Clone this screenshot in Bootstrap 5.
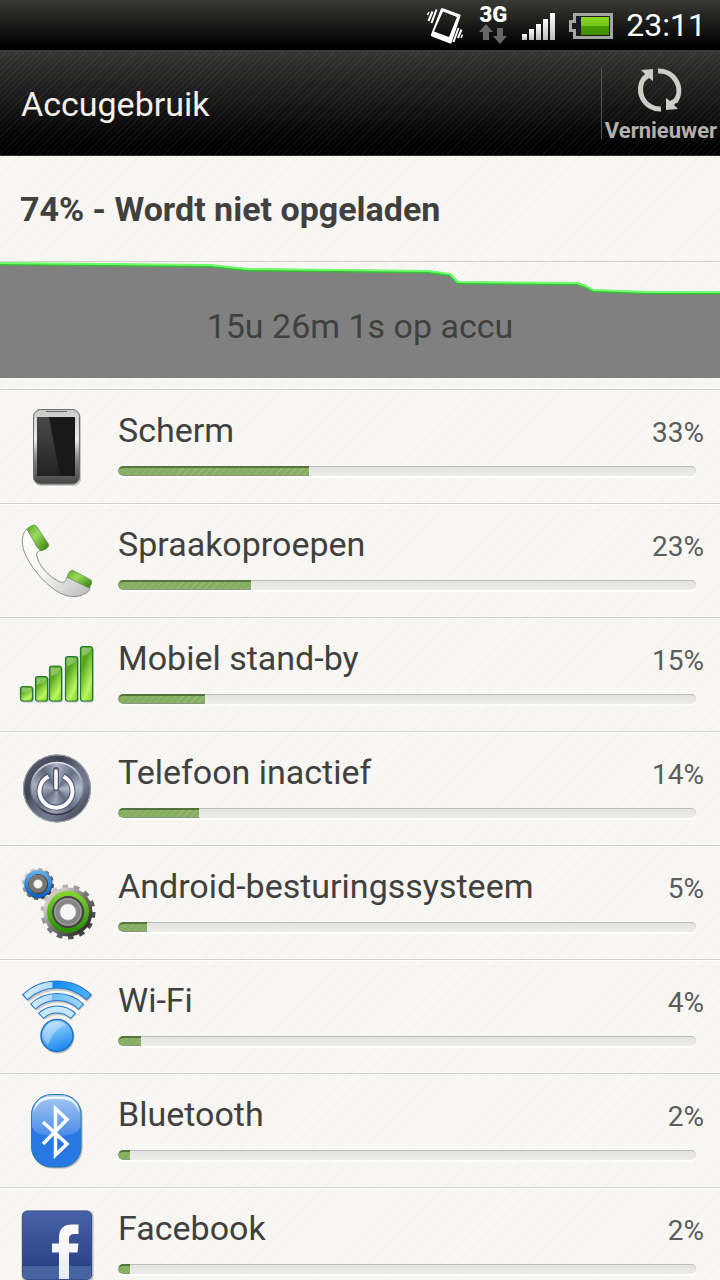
<!DOCTYPE html>
<html lang="nl">
<head>
<meta charset="utf-8">
<meta name="viewport" content="width=device-width, initial-scale=1">
<title>Accugebruik</title>
<link href="https://cdn.jsdelivr.net/npm/bootstrap@5.3.0/dist/css/bootstrap.min.css" rel="stylesheet">
<style>
  body { font-family: Roboto, "Liberation Sans", sans-serif; color: #40403e; background-color: #f7f6f2; }
  .paper { background-image: repeating-linear-gradient(135deg, #f9f8f5 0 2px, #f3f2ee 2px 3px); }
  .statusbar { height: 50px; padding-right: 14px; gap: 13px; background: linear-gradient(#393937, #000 92%); color: #fff; }
  .clock { font-size: 32px; line-height: 52px; }
  .net { font-size: 22px; line-height: 18px; font-weight: 900; }
  .appbar { height: 106px; padding-left: 21px; border-top: 2px solid #3c3c3b; border-bottom: 1px solid #2b2b2a;
    background-image: repeating-linear-gradient(135deg, rgba(255,255,255,.05) 0 1px, transparent 1px 4px), linear-gradient(#333332, #000 90%); color: #f3f1ea; }
  .appbar h1 { font-size: 34px; line-height: 42px; font-weight: 400; }
  .refresh { width: 119px; height: 70px; padding: 0 2px; border: 0; border-left: 1px solid #555; background: none; color: #b4b2ae; }
  .refresh svg { overflow: visible; }
  .refresh span { font-size: 22px; line-height: 16px; font-weight: 700; }
  .state { height: 106px; padding-left: 20px; border-bottom: 1px solid #d2d2ce; }
  .state h2 { font-size: 34px; line-height: 42px; font-weight: 700; }
  .history { height: 116px; margin-bottom: 11px; }
  .history svg { width: 100%; height: 100%; }
  .history p { font-size: 34px; line-height: 42px; padding-top: 12px; }
  .usage { border-top: 1px solid #d0d1cb; height: 114px; padding: 0 16px 0 17px; gap: 21px; box-shadow: inset 0 1px #fff; }
  .usage > svg { width: 80px; height: 80px; }
  .app-name { font-size: 34px; line-height: 40px; }
  .share { font-size: 28px; line-height: 34px; color: #5c5c5a; }
  .meter { height: 10px; margin: 16px 8px 8px 0; border-radius: 5px; background: linear-gradient(#e2e2df, #edece9); box-shadow: inset 0 1px #bfbfba, 0 2px #fff; --bs-progress-bar-bg: #86ae62; }
  .meter .progress-bar { background-image: repeating-linear-gradient(135deg, rgba(255,255,255,.14) 0 1px, transparent 1px 5px); border: 1px solid #8a9680; border-top: 2px solid #55733c; border-right: 0; border-radius: 5px 0 0 5px; }
  .power { border-radius: 50%; background: radial-gradient(circle, transparent 25px, #f7f6f2 34px) , conic-gradient(from 0deg at 50% 50%, #aab0c0, #667086 12%, #b4b9ca 24%, #626b80 40%, #9fa5b5 52%, #667086 64%, #a7adbd 78%, #5f687c 90%, #aab0c0); }
</style>
</head>
<body class="vh-100 d-flex flex-column overflow-hidden">
<div class="statusbar d-flex justify-content-end align-items-center flex-shrink-0">
  <svg width="38" height="40" viewBox="424 5 38 40" fill="none" stroke="#fff" aria-hidden="true">
    <path fill="#fff" stroke="none" fill-rule="evenodd" d="M439 8.500Q440 8 441 8.300L458 14.500Q459 15 458.500 16L449.500 43Q449 44 448 43.600L430 36.500Q428.500 36 429 34.500ZM441 11.500L432 31.500L447 37L455 17Z"/>
    <path stroke-width="2" d="M426.500 21L430.500 11.500M429.500 23L434.500 9.500M459.500 29.500L456 38M456.500 28L451.500 42"/>
    <path stroke-width="1.500" d="M425.500 15L427 12M460.500 34.500L459 38"/>
  </svg>
  <div class="d-flex flex-column align-items-center">
    <span class="net">3G</span>
    <svg width="32" height="21" viewBox="475 26 32 21" fill="#666" aria-hidden="true"><path d="M484 26L491 34H487V42H481V34H477ZM495 30H501V38H505L498 46L491 38H495Z"/></svg>
  </div>
  <svg width="34" height="30" viewBox="0 -3 34 30" aria-hidden="true">
    <defs><linearGradient id="sg" x2="0" y2="1"><stop stop-color="#fff"/><stop offset="1" stop-color="#bbb"/></linearGradient></defs>
    <g fill="url(#sg)"><path d="M0 21h5v6H0z"/><path d="M7 16h5v11H7z"/><path d="M14 11h5v16h-5z"/><path d="M21 6h5v21h-5z"/><path d="M28 0h5v27h-5z"/></g>
  </svg>
  <svg width="44" height="26" viewBox="569 12 44 26" overflow="visible" aria-hidden="true">
    <defs><linearGradient id="bat" x2="0" y2="1"><stop stop-color="#8edb24"/><stop offset=".48" stop-color="#72c31c"/><stop offset=".52" stop-color="#479c00"/><stop offset="1" stop-color="#3f8b00"/></linearGradient></defs>
    <path d="M573 13H613V39H573V32H569V20H573Z" fill="#a5a5a4"/><path d="M576 16H610V36H576V29H572V23H576Z" fill="#1b1b1b"/><path d="M581 17H609V35H581Z" fill="url(#bat)"/>
  </svg>
  <span class="clock">23:11</span>
</div>

<header class="appbar d-flex justify-content-between align-items-center flex-shrink-0">
  <h1 class="m-0">Accugebruik</h1>
  <button type="button" class="refresh d-flex flex-column align-items-center justify-content-between">
    <svg width="48" height="44" viewBox="637 68 48 44" class="flex-shrink-0" aria-hidden="true">
      <g fill="none" stroke="#ceccc6" stroke-width="5"><path d="M661 108A19.500 19.500 0 0 1 645 76"/><path d="M658 70A19.500 19.500 0 0 1 675 101"/></g>
      <path fill="#ceccc6" d="M641 69L653 68V80L649 77L645 80L642 77L645 73ZM678 108L666 109V97L670 100L675 97L678 100L674 104Z"/>
    </svg>
    <span>Vernieuwer</span>
  </button>
</header>

<section class="state paper d-flex align-items-center flex-shrink-0"><h2 class="m-0">74% - Wordt niet opgeladen</h2></section>

<div class="paper flex-shrink-0">
  <section class="history position-relative">
    <svg class="d-block" viewBox="0 0 720 116" preserveAspectRatio="none" aria-hidden="true">
      <path fill="#808080" d="M0 2L210 4L248 8L428 10L450 13L458 21L577 22L586 25L593 29L648 31H720V116H0Z"/>
      <g fill="none" stroke-linejoin="round"><path stroke="#39bd38" stroke-width="3" d="M0 2L210 4L248 8L428 10L450 13L458 21L577 22L586 25L593 29L648 31H720"/>
      <path stroke="#6eff6b" stroke-width="2" d="M0 1L210 3L248 7L428 9L450 12L458 20L577 21L586 24L593 28L648 30H720"/></g>
    </svg>
    <p class="position-absolute top-0 start-0 w-100 h-100 m-0 d-flex align-items-center justify-content-center">15u 26m 1s op accu</p>
  </section>
</div>

<main class="paper flex-grow-1 overflow-hidden">
  <article class="usage d-flex align-items-center">
    <svg viewBox="0 0 80 80" class="flex-shrink-0" aria-hidden="true">
      <defs><linearGradient id="ph" x2="0" y2="1"><stop stop-color="#c8c8c8"/><stop offset=".4" stop-color="#eee"/><stop offset=".65" stop-color="#888"/><stop offset="1" stop-color="#444"/></linearGradient>
      <linearGradient id="gl" x2="0" y2="1"><stop stop-color="#555"/><stop offset="1" stop-color="#252525"/></linearGradient></defs>
      <rect x="17" y="4" width="47" height="75" rx="7" fill="#aaa" opacity=".6"/><rect x="16.500" y="2.500" width="46" height="74.500" rx="7" fill="url(#ph)" stroke="#6f6f6f"/>
      <rect x="20" y="10" width="38" height="59" fill="#191919"/><path d="M20 10H32L43 69H20Z" fill="url(#gl)" opacity=".8"/><path d="M29 4.500H50" stroke="#666"/>
    </svg>
    <div class="flex-grow-1"><div class="d-flex justify-content-between align-items-baseline"><span class="app-name">Scherm</span><span class="share">33%</span></div>
      <div class="progress meter" role="progressbar" aria-label="Scherm" aria-valuenow="33" aria-valuemin="0" aria-valuemax="100"><div class="progress-bar" style="width:33%"></div></div></div>
  </article>
  <article class="usage d-flex align-items-center">
    <svg viewBox="0 0 80 80" class="flex-shrink-0" aria-hidden="true">
      <defs><linearGradient id="hs" x2="1" y2="1"><stop stop-color="#fff"/><stop offset=".5" stop-color="#f4f4f4"/><stop offset="1" stop-color="#bbb"/></linearGradient>
      <linearGradient id="ear" x2="1" y2="1"><stop stop-color="#5aa52c"/><stop offset=".4" stop-color="#9bdc5c"/><stop offset="1" stop-color="#2b7a08"/></linearGradient></defs>
      <path d="M10 8C5 12 4 21 7 30C12 44 25 60 38 69C48 76 58 77 65 74C70 72 73 70 73 66L50 56C49 61 46 63 41 60C30 54 21 43 20 35C19 32 21 30 24 29Z" fill="url(#hs)" stroke="#8d8d8d"/>
      <path d="M10 8Q14 4 18 4L20 6L32 24Q31 28 24 30Q22 28 20 26Z" fill="url(#ear)" stroke="#5c8a42" stroke-width=".7"/>
      <path d="M50 56Q51 51 55 49L74 59Q76 61 72 67Z" fill="url(#ear)" stroke="#5c8a42" stroke-width=".7"/>
    </svg>
    <div class="flex-grow-1"><div class="d-flex justify-content-between align-items-baseline"><span class="app-name">Spraakoproepen</span><span class="share">23%</span></div>
      <div class="progress meter" role="progressbar" aria-label="Spraakoproepen" aria-valuenow="23" aria-valuemin="0" aria-valuemax="100"><div class="progress-bar" style="width:23%"></div></div></div>
  </article>
  <article class="usage d-flex align-items-center">
    <svg viewBox="0 0 80 80" class="flex-shrink-0" aria-hidden="true">
      <defs><linearGradient id="mb" x1="0" y1="0" x2=".6" y2="1"><stop stop-color="#6fae3c"/><stop offset=".35" stop-color="#55a61c"/><stop offset=".85" stop-color="#bdf763"/><stop offset="1" stop-color="#9be23f"/></linearGradient></defs>
      <g fill="#999" opacity=".6"><rect x="4" y="52" width="13" height="15.500" rx="3"/><rect x="19" y="42" width="13" height="25.500" rx="3"/><rect x="33" y="32" width="13" height="35.500" rx="3"/><rect x="49" y="22" width="13" height="45.500" rx="3"/><rect x="64" y="12" width="13" height="55.500" rx="3"/></g>
      <g fill="url(#mb)" stroke="#1f7a32" stroke-width="1.200"><rect x="3.500" y="51.500" width="12" height="14.500" rx="2.500"/><rect x="18.500" y="41.500" width="12" height="24.500" rx="2.500"/><rect x="32.500" y="31" width="12" height="35" rx="2.500"/><rect x="48.500" y="21.500" width="12" height="44.500" rx="2.500"/><rect x="63.500" y="11.500" width="12" height="54.500" rx="2.500"/></g>
      <g fill="#fff" opacity=".3"><path d="M5 53h9q-1 4-9 5zM20 43h9q-1 5-9 7zM34 33h9q-1 6-9 8zM50 23h9q-1 6-9 8zM65 13h9q-1 6-9 8z"/></g>
    </svg>
    <div class="flex-grow-1"><div class="d-flex justify-content-between align-items-baseline"><span class="app-name">Mobiel stand-by</span><span class="share">15%</span></div>
      <div class="progress meter" role="progressbar" aria-label="Mobiel stand-by" aria-valuenow="15" aria-valuemin="0" aria-valuemax="100"><div class="progress-bar" style="width:15%"></div></div></div>
  </article>
  <article class="usage d-flex align-items-center">
    <svg viewBox="0 0 80 80" class="power flex-shrink-0" aria-hidden="true">
      <defs><linearGradient id="rim" x2="1" y2="1"><stop stop-color="#5a6170"/><stop offset=".3" stop-color="#3f4552"/><stop offset=".5" stop-color="#666e80"/><stop offset=".7" stop-color="#747c90"/><stop offset="1" stop-color="#343843"/></linearGradient>
      <linearGradient id="rim2" x2="0" y2="1"><stop stop-color="#dfe2ea"/><stop offset=".5" stop-color="#8a91a3"/><stop offset="1" stop-color="#2d313b"/></linearGradient></defs>
      <g fill="none"><circle cx="40" cy="39.500" r="30" stroke="url(#rim)" stroke-width="8"/><circle cx="40" cy="39.500" r="33.500" stroke="#a2a6ae"/><circle cx="40" cy="39.500" r="26" stroke="url(#rim2)" stroke-width="1.500"/>
      <path d="M32 27A16.500 16.500 0 1 0 46 27" stroke="#515a6c" stroke-width="6"/><path d="M39 21V39" stroke="#515a6c" stroke-width="6" stroke-linecap="round"/>
      <path d="M31.500 27.500A16.500 16.500 0 1 0 46.500 27.500" stroke="#fafafa" stroke-width="4"/><path d="M39 22V39" stroke="#fafafa" stroke-width="3.500" stroke-linecap="round"/></g>
    </svg>
    <div class="flex-grow-1"><div class="d-flex justify-content-between align-items-baseline"><span class="app-name">Telefoon inactief</span><span class="share">14%</span></div>
      <div class="progress meter" role="progressbar" aria-label="Telefoon inactief" aria-valuenow="14" aria-valuemin="0" aria-valuemax="100"><div class="progress-bar" style="width:14%"></div></div></div>
  </article>
  <article class="usage d-flex align-items-center">
    <svg viewBox="0 0 80 80" class="flex-shrink-0" aria-hidden="true">
      <defs><linearGradient id="gr" x2="1" y2="1"><stop offset=".1" stop-color="#ccc8c4"/><stop offset=".5" stop-color="#777"/><stop offset="1" stop-color="#333"/></linearGradient>
      <linearGradient id="gg" x2="0" y2="1"><stop stop-color="#7ed32e"/><stop offset="1" stop-color="#2b8f05"/></linearGradient><linearGradient id="gb" x2="0" y2="1"><stop stop-color="#5aaef2"/><stop offset="1" stop-color="#0f62c8"/></linearGradient></defs>
      <g fill="none">
        <circle cx="21" cy="21" r="14" stroke="url(#gr)" stroke-width="4" pathLength="120" stroke-dasharray="5.500 4.500"/><circle cx="21" cy="21" r="9.500" stroke="url(#gr)" stroke-width="10"/>
        <circle cx="21" cy="21" r="12" stroke="url(#gb)" stroke-width="3.500"/><circle cx="21" cy="21" r="9.500" stroke="#444"/><circle cx="21" cy="21" r="6.500" stroke="#777" stroke-width="5"/><circle cx="21" cy="21" r="4.500" stroke="#aaa"/>
        <circle cx="51" cy="49" r="24.500" stroke="url(#gr)" stroke-width="6" pathLength="140" stroke-dasharray="5 5"/><circle cx="51" cy="49" r="16.500" stroke="url(#gr)" stroke-width="16"/>
        <circle cx="51" cy="49" r="18.500" stroke="url(#gg)" stroke-width="5"/><circle cx="51" cy="49" r="15" stroke="#444" stroke-width="2"/><circle cx="51" cy="49" r="11" stroke="#858585" stroke-width="6"/><circle cx="51" cy="49" r="8" stroke="#c8c8c8"/><circle cx="51" cy="49" r="13" stroke="#aaa" stroke-width=".8"/>
        <circle cx="51" cy="49" r="7.500" fill="#f7f6f2"/><circle cx="21" cy="21" r="4" fill="#f7f6f2"/>
      </g>
    </svg>
    <div class="flex-grow-1"><div class="d-flex justify-content-between align-items-baseline"><span class="app-name">Android-besturingssysteem</span><span class="share">5%</span></div>
      <div class="progress meter" role="progressbar" aria-label="Android-besturingssysteem" aria-valuenow="5" aria-valuemin="0" aria-valuemax="100"><div class="progress-bar" style="width:5%"></div></div></div>
  </article>
  <article class="usage d-flex align-items-center">
    <svg viewBox="0 0 80 80" class="flex-shrink-0" aria-hidden="true">
      <defs><linearGradient id="wf" gradientUnits="userSpaceOnUse" x1="5" x2="75" y1="0" y2="0"><stop stop-color="#d5ecff"/><stop offset=".43" stop-color="#b3dcff"/><stop offset=".44" stop-color="#0a8cf5"/><stop offset="1" stop-color="#55b4fb"/></linearGradient>
      <linearGradient id="wf2" gradientUnits="userSpaceOnUse" x1="12" x2="68" y1="0" y2="0"><stop stop-color="#d5ecff"/><stop offset=".41" stop-color="#b3dcff"/><stop offset=".42" stop-color="#6dbdfb"/><stop offset="1" stop-color="#a5d7ff"/></linearGradient>
      <linearGradient id="dot" x1=".3" x2=".6" y2="1"><stop stop-color="#a9d8ff"/><stop offset="1" stop-color="#1688ee"/></linearGradient></defs>
      <g fill="none"><g stroke="#999" stroke-width="8.500" opacity=".5"><path d="M9 22A46.500 46.500 0 0 1 73 22M17 31A35 35 0 0 1 65 31M25 40A23.500 23.500 0 0 1 57 40"/></g>
      <g stroke="#2a78c8" stroke-width="8"><path d="M7.700 20.600A46.500 46.500 0 0 1 72.300 20.600M15.700 29.800A35 35 0 0 1 64.300 29.800M23.700 39.100A23.500 23.500 0 0 1 56.300 39.100"/></g>
      <g stroke-width="6"><path stroke="url(#wf)" d="M8.600 19.700A46.500 46.500 0 0 1 71.400 19.700"/><path stroke="url(#wf2)" d="M16.400 29.200A35 35 0 0 1 63.600 29.200"/><path stroke="#c5e7ff" d="M24.400 38.400A23.500 23.500 0 0 1 55.600 38.400"/></g></g>
      <circle cx="41" cy="60" r="16.500" fill="#999" opacity=".6"/><circle cx="40" cy="58.500" r="16" fill="url(#dot)" stroke="#1d6fc4" stroke-width="1.500"/><path d="M26 57A14 14 0 0 1 49 48Q37 51 31 68Q26 63 26 57Z" fill="#fff" opacity=".32"/>
    </svg>
    <div class="flex-grow-1"><div class="d-flex justify-content-between align-items-baseline"><span class="app-name">Wi-Fi</span><span class="share">4%</span></div>
      <div class="progress meter" role="progressbar" aria-label="Wi-Fi" aria-valuenow="4" aria-valuemin="0" aria-valuemax="100"><div class="progress-bar" style="width:4%"></div></div></div>
  </article>
  <article class="usage d-flex align-items-center">
    <svg viewBox="0 0 80 80" class="flex-shrink-0" aria-hidden="true">
      <defs><linearGradient id="bt" x2="0" y2="1"><stop stop-color="#fff" stop-opacity=".6"/><stop offset="1" stop-color="#fff" stop-opacity=".15"/></linearGradient></defs>
      <rect x="15.500" y="4.500" width="50" height="73" rx="20" fill="#999" opacity=".7"/><rect x="14.500" y="3.500" width="49.500" height="72.500" rx="20" fill="#2878e4" stroke="#2b7bb0"/>
      <path d="M15 36V23A19.500 19.500 0 0 1 34.500 4H44A19.500 19.500 0 0 1 63.500 23V36Q60 45 39 45Q18 45 15 36Z" fill="url(#bt)"/>
      <path d="M16.500 22Q18 5.500 35 5.500H44Q61 5.500 62.500 22Q58 8 44 8H35Q21 8 16.500 22Z" fill="#fff" opacity=".85"/>
      <path d="M26 31L50 53L38.500 64V17.500L50 28.500L26 53" fill="none" stroke="#fff" stroke-width="3.500"/>
    </svg>
    <div class="flex-grow-1"><div class="d-flex justify-content-between align-items-baseline"><span class="app-name">Bluetooth</span><span class="share">2%</span></div>
      <div class="progress meter" role="progressbar" aria-label="Bluetooth" aria-valuenow="2" aria-valuemin="0" aria-valuemax="100"><div class="progress-bar" style="width:2%"></div></div></div>
  </article>
  <article class="usage d-flex align-items-center">
    <svg viewBox="0 0 80 80" class="flex-shrink-0" aria-hidden="true">
      <defs><linearGradient id="fb" x2="0" y2="1"><stop stop-color="#4862a8"/><stop offset="1" stop-color="#243c80"/></linearGradient><linearGradient id="ff" x2="0" y2="1"><stop stop-color="#fff"/><stop offset="1" stop-color="#e8eaf0"/></linearGradient></defs>
      <rect x="4.500" y="5.500" width="72" height="71" rx="6" fill="#999" opacity=".7"/><rect x="5.500" y="6" width="69" height="68.500" rx="5" fill="url(#fb)" stroke="#3a5089"/><path d="M6 61H74V70Q74 74 70 74H10Q6 74 6 70Z" fill="#4664a0"/>
      <path fill="url(#ff)" d="M42 74V47.500H35V38.500H42V33Q42 19.500 55 19.500H61.500V29H57Q52 29 52 33.500V38.500H61.500L60.500 47.500H52V74Z"/>
    </svg>
    <div class="flex-grow-1"><div class="d-flex justify-content-between align-items-baseline"><span class="app-name">Facebook</span><span class="share">2%</span></div>
      <div class="progress meter" role="progressbar" aria-label="Facebook" aria-valuenow="2" aria-valuemin="0" aria-valuemax="100"><div class="progress-bar" style="width:2%"></div></div></div>
  </article>
</main>
<script src="https://cdn.jsdelivr.net/npm/bootstrap@5.3.0/dist/js/bootstrap.bundle.min.js"></script>
</body>
</html>
